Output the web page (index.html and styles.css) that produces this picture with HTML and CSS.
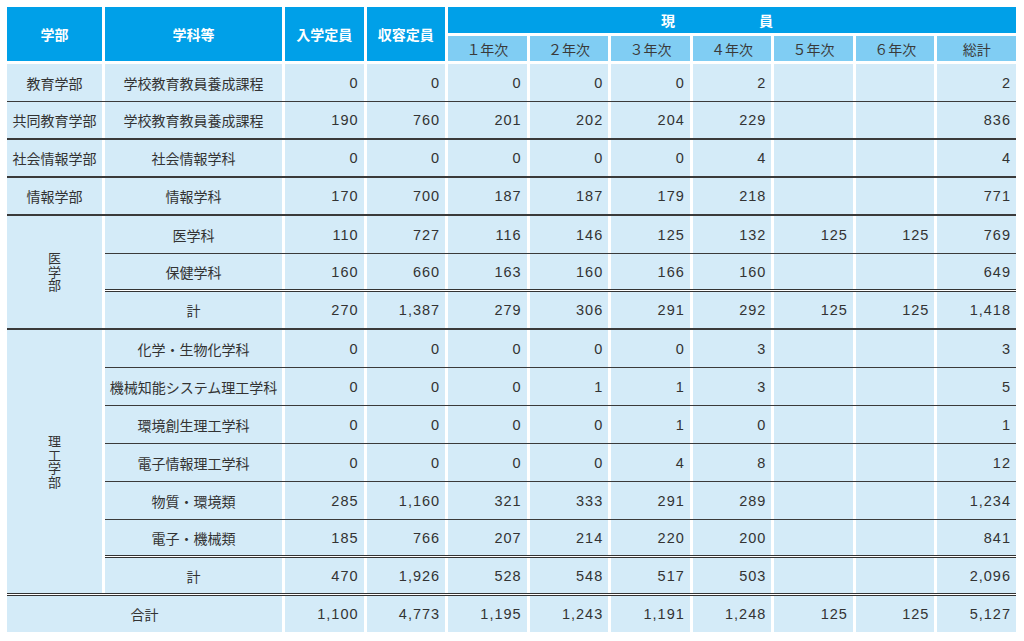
FILE: index.html
```html
<!DOCTYPE html>
<html lang="ja">
<head>
<meta charset="utf-8">
<title>学生現員</title>
<link rel="stylesheet" href="styles.css">
</head>
<body>
<div class="table">
  <div class="head">
    <div class="h main">学部</div>
    <div class="h main">学科等</div>
    <div class="h main">入学定員</div>
    <div class="h main">収容定員</div>
    <div class="h main genin"><span>現</span><span>員</span></div>
    <div class="h sub">１年次</div>
    <div class="h sub">２年次</div>
    <div class="h sub">３年次</div>
    <div class="h sub">４年次</div>
    <div class="h sub">５年次</div>
    <div class="h sub">６年次</div>
    <div class="h sub">総計</div>
  </div>

  <div class="group thin">
    <div class="dept">教育学部</div>
    <div class="rows">
      <div class="row">
        <div class="cell name">学校教育教員養成課程</div>
        <div class="cell num">0</div><div class="cell num">0</div><div class="cell num">0</div><div class="cell num">0</div><div class="cell num">0</div><div class="cell num">2</div><div class="cell num"></div><div class="cell num"></div><div class="cell num">2</div>
      </div>
    </div>
  </div>

  <div class="group">
    <div class="dept">共同教育学部</div>
    <div class="rows">
      <div class="row">
        <div class="cell name">学校教育教員養成課程</div>
        <div class="cell num">190</div><div class="cell num">760</div><div class="cell num">201</div><div class="cell num">202</div><div class="cell num">204</div><div class="cell num">229</div><div class="cell num"></div><div class="cell num"></div><div class="cell num">836</div>
      </div>
    </div>
  </div>

  <div class="group">
    <div class="dept">社会情報学部</div>
    <div class="rows">
      <div class="row">
        <div class="cell name">社会情報学科</div>
        <div class="cell num">0</div><div class="cell num">0</div><div class="cell num">0</div><div class="cell num">0</div><div class="cell num">0</div><div class="cell num">4</div><div class="cell num"></div><div class="cell num"></div><div class="cell num">4</div>
      </div>
    </div>
  </div>

  <div class="group">
    <div class="dept">情報学部</div>
    <div class="rows">
      <div class="row">
        <div class="cell name">情報学科</div>
        <div class="cell num">170</div><div class="cell num">700</div><div class="cell num">187</div><div class="cell num">187</div><div class="cell num">179</div><div class="cell num">218</div><div class="cell num"></div><div class="cell num"></div><div class="cell num">771</div>
      </div>
    </div>
  </div>

  <div class="group">
    <div class="dept"><span class="vtext">医学部</span></div>
    <div class="rows">
      <div class="row tl">
        <div class="cell name">医学科</div>
        <div class="cell num">110</div><div class="cell num">727</div><div class="cell num">116</div><div class="cell num">146</div><div class="cell num">125</div><div class="cell num">132</div><div class="cell num">125</div><div class="cell num">125</div><div class="cell num">769</div>
      </div>
      <div class="row dl">
        <div class="cell name">保健学科</div>
        <div class="cell num">160</div><div class="cell num">660</div><div class="cell num">163</div><div class="cell num">160</div><div class="cell num">166</div><div class="cell num">160</div><div class="cell num"></div><div class="cell num"></div><div class="cell num">649</div>
      </div>
      <div class="row">
        <div class="cell name">計</div>
        <div class="cell num">270</div><div class="cell num">1,387</div><div class="cell num">279</div><div class="cell num">306</div><div class="cell num">291</div><div class="cell num">292</div><div class="cell num">125</div><div class="cell num">125</div><div class="cell num">1,418</div>
      </div>
    </div>
  </div>

  <div class="group dbl">
    <div class="dept"><span class="vtext">理工学部</span></div>
    <div class="rows">
      <div class="row tl">
        <div class="cell name">化学・生物化学科</div>
        <div class="cell num">0</div><div class="cell num">0</div><div class="cell num">0</div><div class="cell num">0</div><div class="cell num">0</div><div class="cell num">3</div><div class="cell num"></div><div class="cell num"></div><div class="cell num">3</div>
      </div>
      <div class="row tl">
        <div class="cell name">機械知能システム理工学科</div>
        <div class="cell num">0</div><div class="cell num">0</div><div class="cell num">0</div><div class="cell num">1</div><div class="cell num">1</div><div class="cell num">3</div><div class="cell num"></div><div class="cell num"></div><div class="cell num">5</div>
      </div>
      <div class="row tl">
        <div class="cell name">環境創生理工学科</div>
        <div class="cell num">0</div><div class="cell num">0</div><div class="cell num">0</div><div class="cell num">0</div><div class="cell num">1</div><div class="cell num">0</div><div class="cell num"></div><div class="cell num"></div><div class="cell num">1</div>
      </div>
      <div class="row tl">
        <div class="cell name">電子情報理工学科</div>
        <div class="cell num">0</div><div class="cell num">0</div><div class="cell num">0</div><div class="cell num">0</div><div class="cell num">4</div><div class="cell num">8</div><div class="cell num"></div><div class="cell num"></div><div class="cell num">12</div>
      </div>
      <div class="row tl">
        <div class="cell name">物質・環境類</div>
        <div class="cell num">285</div><div class="cell num">1,160</div><div class="cell num">321</div><div class="cell num">333</div><div class="cell num">291</div><div class="cell num">289</div><div class="cell num"></div><div class="cell num"></div><div class="cell num">1,234</div>
      </div>
      <div class="row dl">
        <div class="cell name">電子・機械類</div>
        <div class="cell num">185</div><div class="cell num">766</div><div class="cell num">207</div><div class="cell num">214</div><div class="cell num">220</div><div class="cell num">200</div><div class="cell num"></div><div class="cell num"></div><div class="cell num">841</div>
      </div>
      <div class="row">
        <div class="cell name">計</div>
        <div class="cell num">470</div><div class="cell num">1,926</div><div class="cell num">528</div><div class="cell num">548</div><div class="cell num">517</div><div class="cell num">503</div><div class="cell num"></div><div class="cell num"></div><div class="cell num">2,096</div>
      </div>
    </div>
  </div>

  <div class="row total">
    <div class="cell name">合計</div>
    <div class="cell num">1,100</div><div class="cell num">4,773</div><div class="cell num">1,195</div><div class="cell num">1,243</div><div class="cell num">1,191</div><div class="cell num">1,248</div><div class="cell num">125</div><div class="cell num">125</div><div class="cell num">5,127</div>
  </div>
</div>
</body>
</html>
```

FILE: styles.css
```css
* { box-sizing: border-box; }

body {
  margin: 0;
  background: #ffffff;
  font-family: "Noto Sans CJK JP", sans-serif;
  font-size: 14px;
  color: #333333;
}

.table {
  width: 1009px;
  margin: 7px 0 0 7px;
}

.head {
  display: grid;
  grid-template-columns: 95px 177px repeat(9, 1fr);
  grid-template-rows: 26px 25px;
  gap: 3px;
  margin-bottom: 3px;
}

.h {
  display: flex;
  align-items: center;
  justify-content: center;
}

.main {
  grid-row: span 2;
  background: #00a0e8;
  color: #ffffff;
  font-weight: 700;
}

.genin {
  grid-row: auto;
  grid-column: span 7;
  gap: 84px;
  padding-right: 30px;
}

.sub {
  background: #80cdf3;
  color: #3a3a3a;
}

.group {
  --bw: 2px;
  display: flex;
  gap: 3px;
  border-bottom: 2px solid #3a3a3a;
}

.group.thin {
  --bw: 1px;
  border-bottom-width: 1px;
}

.group.dbl {
  --bw: 3px;
  border-bottom: 3px double #333333;
}

.dept {
  flex: none;
  width: 95px;
  background: #d4ebf8;
  display: flex;
  align-items: center;
  justify-content: center;
}

.vtext {
  writing-mode: vertical-rl;
  font-size: 13px;
  line-height: 1;
  letter-spacing: 0.4px;
}

.rows {
  flex: 1;
  display: flex;
  flex-direction: column;
}

.row {
  display: grid;
  grid-template-columns: 177px repeat(9, 1fr);
  column-gap: 3px;
  height: 38px;
}

.row.tl {
  border-bottom: 1px solid #3a3a3a;
}

.row.dl {
  border-bottom: 3px double #333333;
}

.rows .row:last-child {
  height: calc(38px - var(--bw));
}

.row.total {
  grid-template-columns: 275px repeat(9, 1fr);
  height: 36px;
}

.cell {
  background: #d4ebf8;
  display: flex;
  align-items: center;
}

.name {
  justify-content: center;
}

.num {
  justify-content: flex-end;
  padding-right: 5px;
  font-family: "Liberation Sans", "Noto Sans CJK JP", sans-serif;
  font-size: 14.5px;
  letter-spacing: 1px;
}
```
